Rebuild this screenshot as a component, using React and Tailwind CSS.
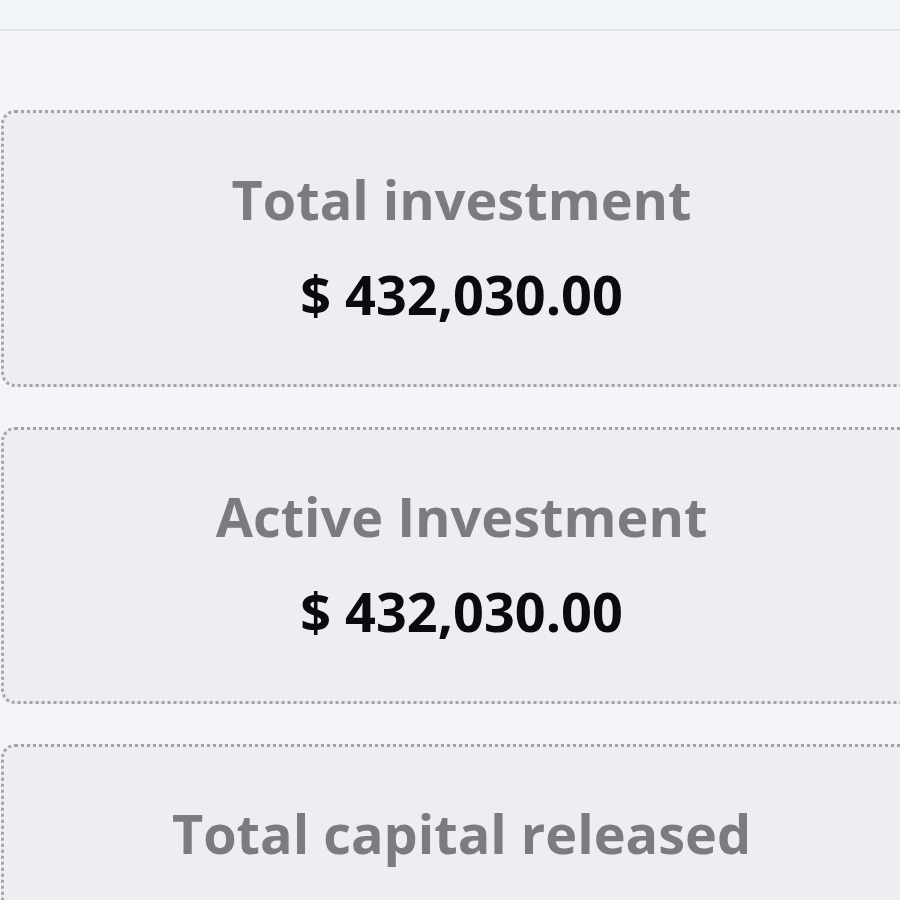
import React from "react";

const cards = [
  { label: "Total investment", value: "$ 432,030.00" },
  { label: "Active Investment", value: "$ 432,030.00" },
  { label: "Total capital released", value: "$ 0.00" },
];

const StatCard = ({ label, value }) => (
  <div className="h-[277px] shrink-0 rounded-[14px] border-[3px] border-dotted border-[#a3a4ab] bg-[#eceef4] flex flex-col items-center pt-[50px]">
    <div className="text-[54px] leading-[72px] font-bold text-[#7b7c81]">{label}</div>
    <div className="mt-[23px] text-[54px] leading-[72px] font-bold text-[#0b0b0d]">{value}</div>
  </div>
);

export default function App() {
  return (
    <div
      className="w-[900px] h-[900px] overflow-hidden bg-[#f3f5f9]"
      style={{ fontFamily: '"Open Sans", "Noto Sans", sans-serif' }}
    >
      <div className="h-[31px] border-b-[2px] border-[#e1e4e9] bg-[#f1f4f8]" />
      <div className="w-[922px] pl-[1px] pt-[79px] flex flex-col gap-[40px]">
        {cards.map((c) => (
          <StatCard key={c.label} {...c} />
        ))}
      </div>
    </div>
  );
}
